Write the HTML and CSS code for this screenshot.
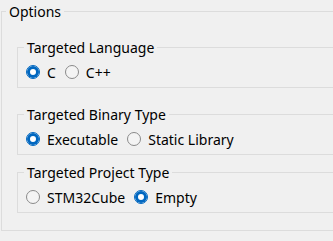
FILE: index.html
```html
<!DOCTYPE html>
<html lang="en">

<head>
    <meta charset="UTF-8">
    <meta name="viewport" content="width=device-width, initial-scale=1.0">
    <title>Options</title>
    <link rel="stylesheet" href="styles.css">
</head>

<body>
    <fieldset class="group outer">
        <legend class="group-title">Options</legend>

        <fieldset class="group inner first">
            <legend class="group-title">Targeted Language</legend>
            <div class="choices">
                <label class="choice"><input type="radio" name="lang" class="radio" checked> C</label>
                <label class="choice"><input type="radio" name="lang" class="radio"> C++</label>
            </div>
        </fieldset>

        <fieldset class="group inner second">
            <legend class="group-title">Targeted Binary Type</legend>
            <div class="choices">
                <label class="choice"><input type="radio" name="binary" class="radio" checked> Executable</label>
                <label class="choice"><input type="radio" name="binary" class="radio"> Static Library</label>
            </div>
        </fieldset>

        <fieldset class="group inner third">
            <legend class="group-title">Targeted Project Type</legend>
            <div class="choices">
                <label class="choice"><input type="radio" name="project" class="radio"> STM32Cube</label>
                <label class="choice"><input type="radio" name="project" class="radio" checked> Empty</label>
            </div>
        </fieldset>
    </fieldset>
</body>

</html>
```

FILE: styles.css
```css
body {
    font-family: "Noto Sans", "Open Sans", sans-serif;
    font-size: 14px;
    color: #000;
    background-color: #f0f0f0;
    margin: 0;
    padding: 0;
    overflow: hidden;
}

.group {
    border: 1px solid #dcdcdc;
    border-right: none;
    min-inline-size: 0;
}

.group-title {
    height: 21px;
    line-height: 21px;
    padding: 0 3px;
}

.outer {
    margin: 1px 0 0 1px;
    padding: 0 0 17px 4px;
}

.inner {
    margin: 15px 0 0 11px;
    padding: 4px 0 5px 6px;
}

.inner.second {
    margin-top: 16px;
}

.inner.third {
    margin-top: 7px;
}

.choices {
    display: flex;
    gap: 9px;
    margin-left: 2px;
    height: 20px;
}

.choice {
    display: flex;
    align-items: center;
    gap: 7px;
}

.radio {
    appearance: none;
    -webkit-appearance: none;
    flex: none;
    width: 14px;
    height: 14px;
    margin: 0;
    border: 1px solid #8a8a8a;
    border-radius: 50%;
    background-color: #f4f4f4;
    box-sizing: border-box;
}

.radio:checked {
    border-color: #0067c0;
    background-color: #fff;
    box-shadow: inset 0 0 0 3px #0067c0;
}
```
